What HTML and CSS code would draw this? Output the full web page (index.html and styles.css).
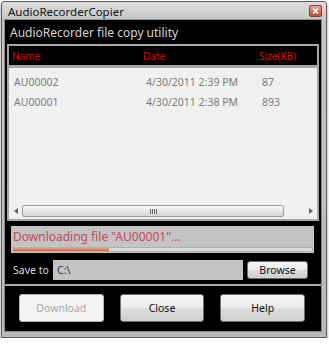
FILE: index.html
```html
<!DOCTYPE html>
<html>
<head>
<meta charset="utf-8">
<link rel="stylesheet" href="styles.css">
</head>
<body>
<div class="window">
  <div class="titlebar">
    <span class="title">AudioRecorderCopier</span>
    <span class="close-btn"><svg width="7" height="6" viewBox="0 0 7 6"><path d="M1 0.5 L6 5.5 M6 0.5 L1 5.5" stroke="#fff" stroke-width="1.6"/></svg></span>
  </div>
  <div class="client">
    <div class="heading">AudioRecorder file copy utility</div>
    <div class="listbox">
      <div class="list-head">
        <span>Name</span><span>Date</span><span>Size(KB)</span>
      </div>
      <div class="list-body">
        <div class="rows">
          <div class="row"><span>AU00002</span><span>4/30/2011 2:39 PM</span><span>87</span></div>
          <div class="row"><span>AU00001</span><span>4/30/2011 2:38 PM</span><span>893</span></div>
        </div>
        <div class="hscroll">
          <span class="arrow"><svg width="4" height="6" viewBox="0 0 4 6"><path d="M4 0 L0 3 L4 6 Z" fill="#606060"/></svg></span>
          <div class="thumb"><span class="grip"><i></i><i></i><i></i><i></i></span></div>
          <div class="track"></div>
          <span class="arrow"><svg width="4" height="6" viewBox="0 0 4 6"><path d="M0 0 L4 3 L0 6 Z" fill="#606060"/></svg></span>
        </div>
      </div>
    </div>
    <div class="status">
      <div class="status-text">Downloading file "AU00001"...</div>
      <div class="progress"><div class="fill" style="width:32%"></div></div>
    </div>
    <div class="save-row">
      <span class="save-label">Save to</span>
      <div class="path">C:\</div>
      <button class="btn browse">Browse</button>
    </div>
    <div class="actions">
      <button class="btn big disabled">Download</button>
      <button class="btn big">Close</button>
      <button class="btn big">Help</button>
    </div>
  </div>
</div>
</body>
</html>
```
FILE: styles.css
```css
* { box-sizing: border-box; }
html, body { margin: 0; padding: 0; background: #ffffff; }
body { font-family: "Noto Sans", "Open Sans", sans-serif; }

.window {
  margin: 1px 0 0 1px;
  width: 326px;
  height: 337px;
  border: 1px solid #5c5c5c;
  border-radius: 3px 3px 0 0;
  background: linear-gradient(180deg, #dcdcdc 0%, #c4c4c4 6%, #b9b9b9 100%);
  padding: 0 4px 6px 3px;
  box-shadow: 0 2px 3px rgba(0,0,0,0.45);
  display: flex;
  flex-direction: column;
}

.titlebar {
  height: 18px;
  display: flex;
  align-items: center;
  justify-content: space-between;
  padding: 0 0 0 3px;
}
.title { font-size: 11.5px; color: #111; }
.close-btn {
  width: 13px; height: 12px;
  border: 1px solid #8a4030;
  border-radius: 2px;
  background: linear-gradient(180deg, #eca894 0%, #d86e58 50%, #c45238 100%);
  display: flex; align-items: center; justify-content: center;
}

.client {
  width: 316px;
  height: 311px;
  background: #000;
  box-shadow: 0 0 0 1px #8c8c8c;
  display: flex;
  flex-direction: column;
}

.heading {
  height: 24px;
  line-height: 25px;
  padding-left: 5px;
  font-size: 12px;
  color: #d6d6d6;
}

.listbox {
  margin: 0 2px;
  height: 177px;
  border: 2px solid #a6a6a6;
  background: #a6a6a6;
  display: flex;
  flex-direction: column;
}
.list-head {
  height: 19px;
  background: #000;
  display: grid;
  grid-template-columns: 131px 116px 1fr;
  align-items: center;
  padding-left: 3px;
  font-size: 10px;
  color: #e00000;
}
.list-body {
  margin-top: 3px;
  flex: 1;
  background: #f0f0f0;
  display: flex;
  flex-direction: column;
}
.rows { flex: 1; padding-top: 4px; }
.row {
  height: 20px;
  display: grid;
  grid-template-columns: 132px 116px 1fr;
  align-items: center;
  padding-left: 5px;
  font-size: 10.5px;
  color: #7c7c7c;
}
.hscroll {
  height: 12px;
  margin-bottom: 2px;
  display: flex;
  align-items: center;
}
.arrow { width: 13px; height: 12px; display: flex; align-items: center; justify-content: center; }
.thumb {
  width: 262px; height: 12px;
  border: 1px solid #9c9c9c;
  border-radius: 2px;
  background: linear-gradient(180deg, #f6f6f6 0%, #e6e6e6 50%, #d6d6d6 100%);
  display: flex; align-items: center; justify-content: center;
}
.grip { display: flex; gap: 1px; }
.grip i { display: block; width: 1px; height: 5px; background: #666; }
.track { flex: 1; }

.status {
  margin: 5px 0 0 6px;
  width: 303px;
  height: 27px;
  background: #c3c3c3;
  display: flex;
  flex-direction: column;
}
.status-text {
  height: 21px;
  line-height: 21px;
  padding-left: 2px;
  font-size: 12px;
  color: #c24a5c;
}
.progress {
  margin: 0 1px;
  height: 5px;
  background: #dadada;
  border: 1px solid #b0b0b0;
  border-radius: 2px;
  overflow: hidden;
}
.fill { height: 100%; background: linear-gradient(180deg, #f0a080, #d8603a); }

.save-row {
  margin-top: 7px;
  height: 20px;
  display: flex;
  align-items: center;
  padding-left: 8px;
}
.save-label { width: 40px; font-size: 10.5px; color: #dcdcdc; }
.path {
  width: 190px; height: 20px;
  background: #c3c3c3;
  font-size: 10.5px;
  color: #333;
  line-height: 20px;
  padding-left: 4px;
}
.btn {
  font-family: "Noto Sans", "Open Sans", sans-serif;
  border: 1px solid #707070;
  border-radius: 3px;
  background: linear-gradient(180deg, #f4f4f4 0%, #ececec 48%, #dddddd 52%, #cfcfcf 100%);
  color: #111;
  padding: 0;
  font-size: 10.5px;
}
.browse { margin-left: 4px; width: 61px; height: 18px; }

.actions {
  margin-top: 4px;
  border-top: 2px solid #a6a6a6;
  padding: 8px 16px 0 14px;
  display: flex;
  gap: 16px;
}
.big { width: 85px; height: 28px; font-size: 10.5px; }
.disabled {
  background: #f4f4f4;
  border-color: #b4b4b4;
  color: #aaaaaa;
}
```
